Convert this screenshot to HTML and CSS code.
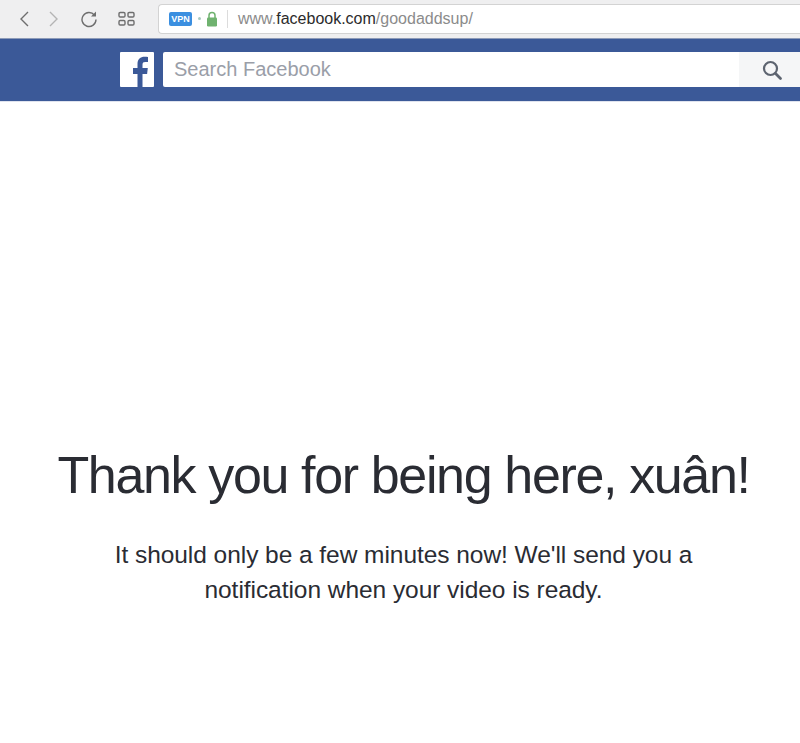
FILE: index.html
```html
<!DOCTYPE html>
<html lang="en">
<head>
  <meta charset="UTF-8" />
  <meta name="viewport" content="width=device-width, initial-scale=1.0" />
  <title>Facebook</title>
  <link rel="stylesheet" href="styles.css">
</head>
<body>
  <div class="browser-bar">
    <svg class="nav-icon back" width="12" height="18" viewBox="0 0 12 18"><path d="M10 2 3 9l7 7" fill="none" stroke="#6e6e6e" stroke-width="1.4"/></svg>
    <svg class="nav-icon forward" width="12" height="18" viewBox="0 0 12 18"><path d="M2 2l7 7-7 7" fill="none" stroke="#b4b4b4" stroke-width="1.4"/></svg>
    <svg class="nav-icon reload" width="18" height="18" viewBox="0 0 18 18"><path d="M14.5 5.2A7 7 0 1 0 16 9.5" fill="none" stroke="#6e6e6e" stroke-width="1.4"/><path d="M16 1.5v5h-5z" fill="#6e6e6e"/></svg>
    <svg class="nav-icon tabs" width="18" height="16" viewBox="0 0 18 16"><g fill="none" stroke="#6e6e6e" stroke-width="1.4"><rect x="1" y="1.5" width="6" height="4.5" rx="1.2"/><rect x="10" y="1.5" width="6" height="4.5" rx="1.2"/><rect x="1" y="9.5" width="6" height="4.5" rx="1.2"/><rect x="10" y="9.5" width="6" height="4.5" rx="1.2"/></g></svg>
    <div class="url-box">
      <span class="vpn">VPN</span>
      <span class="url-dot"></span>
      <svg class="lock" width="12" height="16" viewBox="0 0 12 16"><path d="M3 7V4.5a3 3 0 0 1 6 0V7" fill="none" stroke="#6fb26f" stroke-width="1.5"/><rect x="1" y="6.5" width="10" height="9" rx="1.2" fill="#6fb26f"/></svg>
      <span class="url-sep"></span>
      <span class="url">www.<b>facebook.com</b>/goodaddsup/</span>
    </div>
  </div>

  <div class="fb-bar">
    <svg class="fb-logo" width="34" height="35" viewBox="0 0 34 35" aria-label="Facebook">
      <rect width="34" height="35" rx="1" fill="#fff"/>
      <path d="M17.500 35V22h-4.500v-6h4.500v-4c0-4.800 3-7.200 7-7.200 1.500 0 2.700.1 3.500.2v5h-2.800c-1.900 0-2.700.8-2.700 2.500V16h5.300l-.7 6H22.500v13z" fill="#3b5998"/>
    </svg>
    <div class="search">
      <span class="search-text">Search Facebook</span>
      <div class="search-btn">
        <svg width="22" height="22" viewBox="0 0 22 22"><circle cx="9.500" cy="9.500" r="6.500" fill="none" stroke="#5d6470" stroke-width="2.200"/><path d="m14.500 14.500 5 5" stroke="#5d6470" stroke-width="2.800" stroke-linecap="round"/></svg>
      </div>
    </div>
  </div>

  <div class="message">
    <h1>Thank you for being here, xuân!</h1>
    <p>It should only be a few minutes now! We'll send you a<br>notification when your video is ready.</p>
  </div>
</body>
</html>
```

FILE: styles.css
```css
body {
  font-family: "Liberation Sans", Arial, sans-serif;
  background: #fff;
  margin: 0;
  padding: 0;
  height: 743px;
  overflow: hidden;
}
.browser-bar {
  height: 38px;
  background: #efeff0;
  border-bottom: 1px solid #8d9bb8;
  display: flex;
  align-items: center;
  padding-left: 18px;
}
.nav-icon {
  flex: none;
}
.forward {
  margin-left: 18px;
}
.reload {
  margin-left: 20px;
}
.tabs {
  margin-left: 20px;
}
.url-box {
  flex: 1;
  height: 28px;
  margin-left: 22px;
  margin-bottom: 1px;
  background: #fff;
  border: 1px solid #d3d3d3;
  border-right: none;
  border-radius: 4px 0 0 4px;
  display: flex;
  align-items: center;
  padding-left: 10px;
}
.vpn {
  width: 23px;
  height: 14px;
  background: #3b8fe0;
  border-radius: 2px;
  color: #fff;
  font-size: 9px;
  font-weight: bold;
  line-height: 14px;
  text-align: center;
}
.url-dot {
  width: 3px;
  height: 3px;
  margin-left: 6px;
  border-radius: 50%;
  background: #a9c9c0;
}
.lock {
  margin-left: 5px;
}
.url-sep {
  width: 1px;
  height: 18px;
  margin-left: 9px;
  background: #dcdcdc;
}
.url {
  margin-left: 10px;
  font-size: 16px;
  color: #8b8b8b;
}
.url b {
  font-weight: normal;
  color: #2b2b2b;
}
.fb-bar {
  height: 61px;
  padding-bottom: 1px;
  background: #3b5998;
  border-bottom: 1px solid #dfe3ee;
  display: flex;
  align-items: center;
  padding-left: 120px;
}
.fb-logo {
  flex: none;
}
.search {
  flex: 1;
  height: 35px;
  margin-left: 9px;
  background: #fff;
  border-radius: 2px 0 0 2px;
  display: flex;
  align-items: center;
}
.search-text {
  flex: 1;
  padding-left: 11px;
  font-size: 20px;
  color: #9a9ea8;
}
.search-btn {
  width: 61px;
  height: 35px;
  background: #f5f6f7;
  display: flex;
  align-items: center;
  padding-left: 22px;
  box-sizing: border-box;
}
.message {
  padding-top: 343px;
  padding-left: 7px;
  text-align: center;
  color: #2a2c33;
}
h1 {
  font-size: 52px;
  font-weight: normal;
  line-height: 60px;
  margin: 0;
  letter-spacing: -1.360px;
}
p {
  font-size: 24.500px;
  line-height: 35px;
  margin: 32px 0 0;
  letter-spacing: -0.050px;
}
```
